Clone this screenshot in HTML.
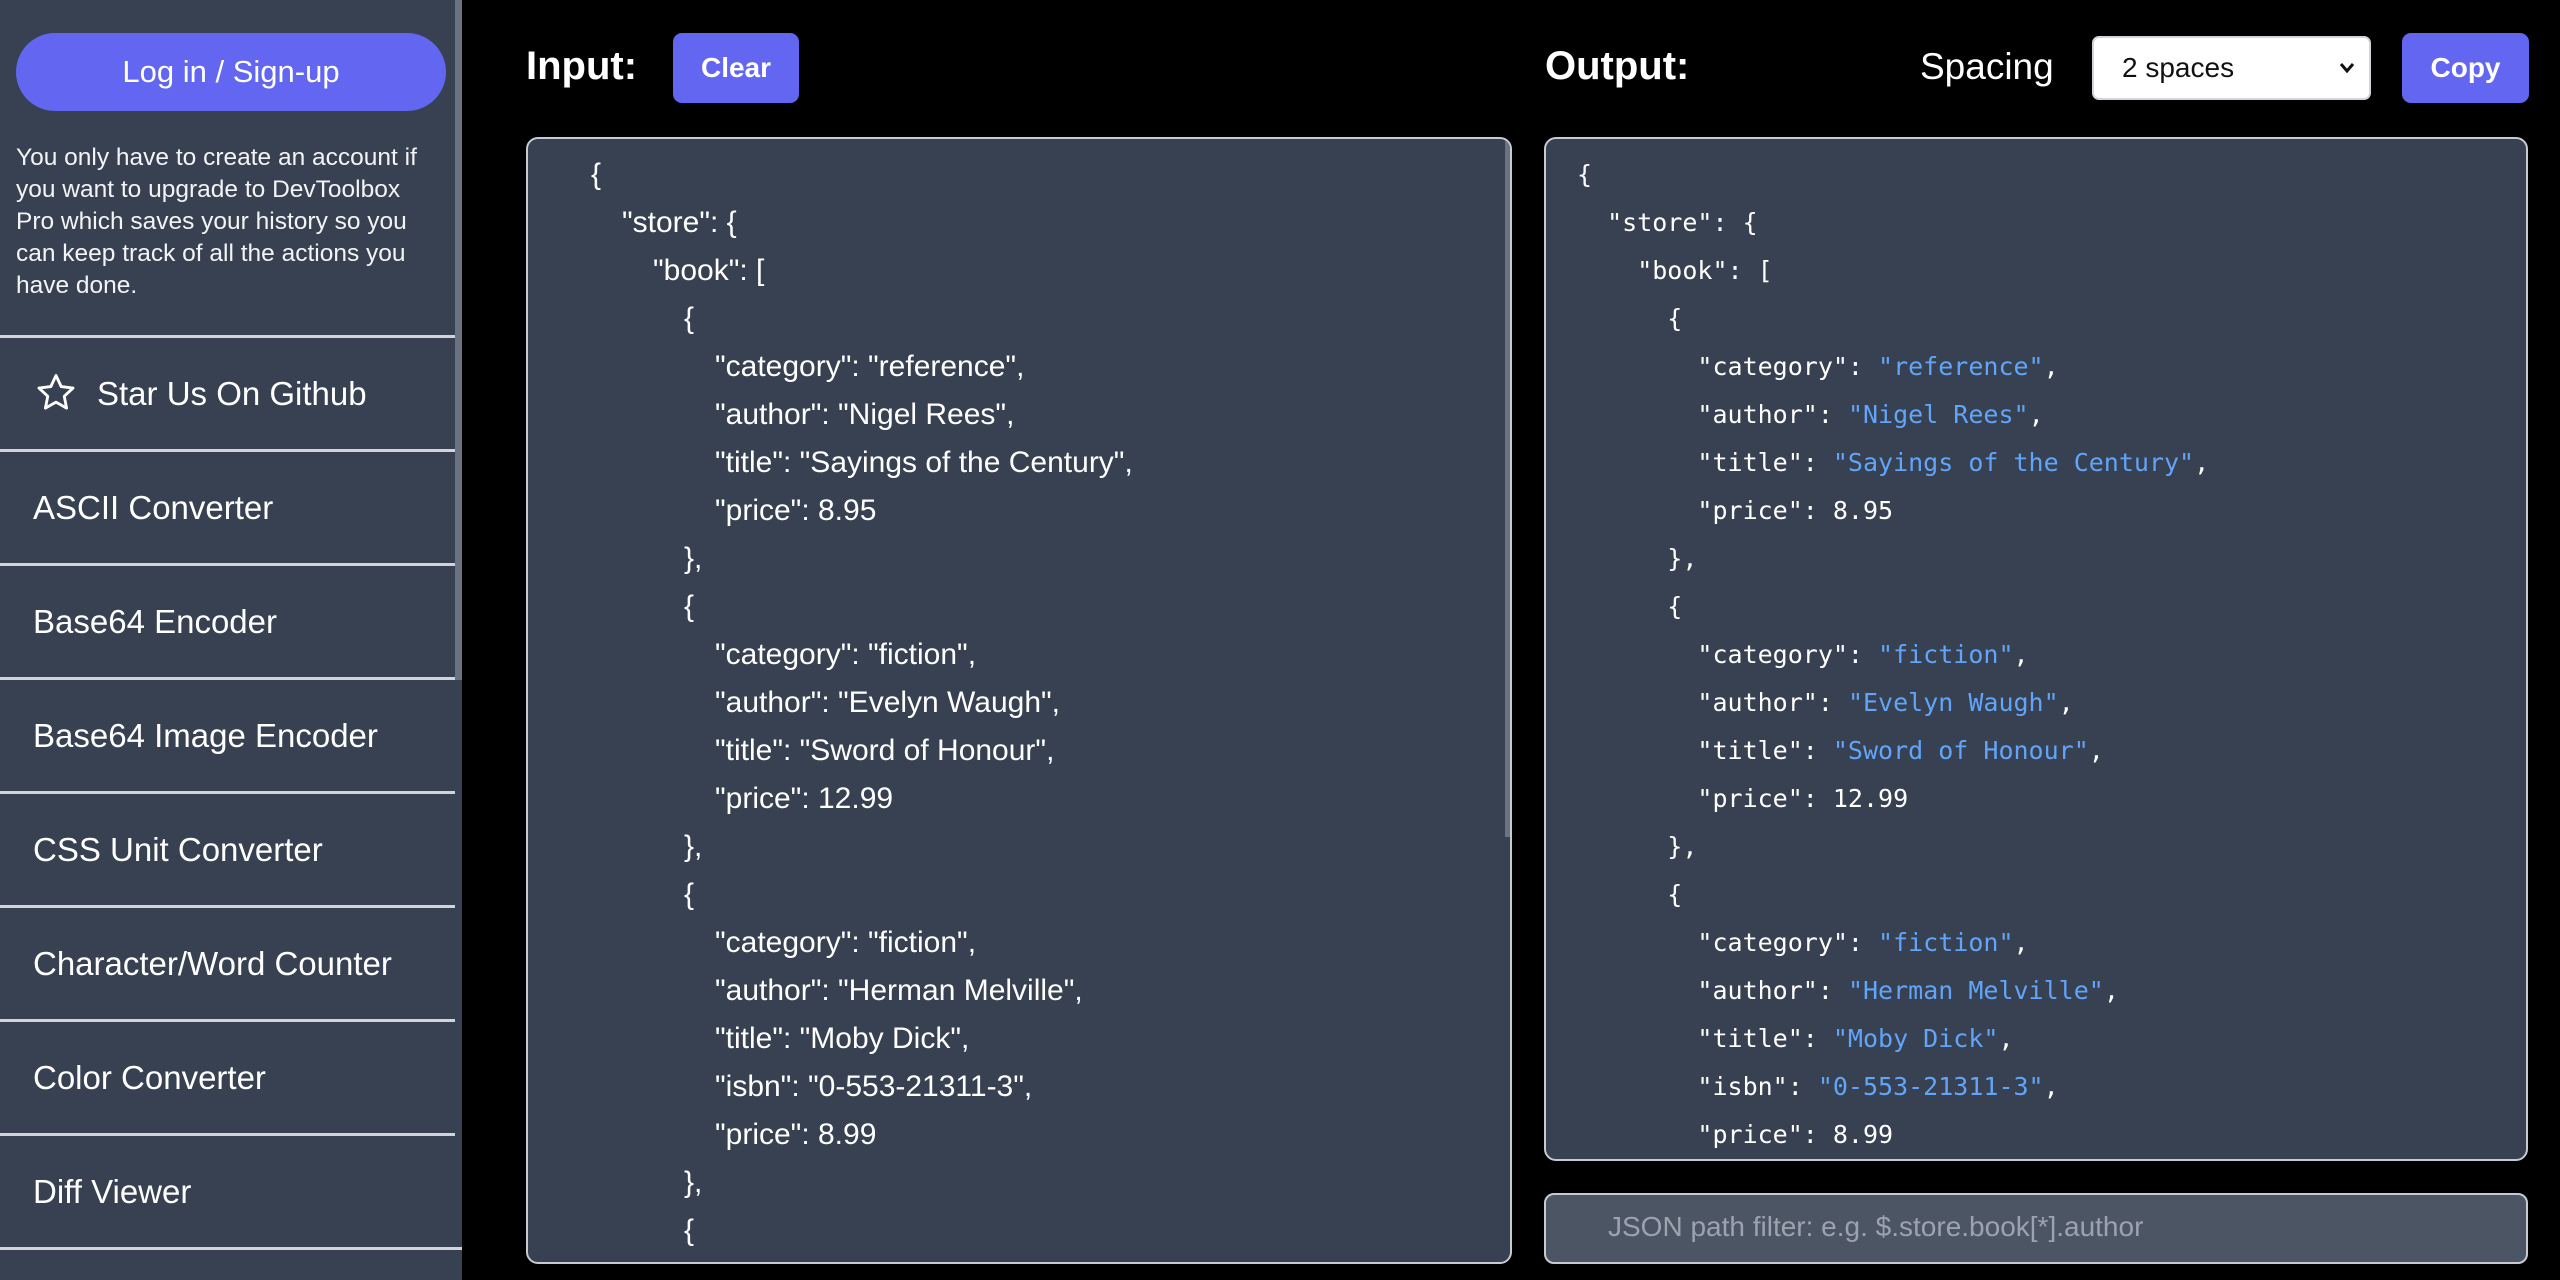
<!DOCTYPE html>
<html><head><meta charset="utf-8"><style>
*{margin:0;padding:0;box-sizing:border-box}
html,body{width:2560px;height:1280px;overflow:hidden}
body{background:#000;position:relative;font-family:"Liberation Sans",sans-serif;color:#fff}
.a{position:absolute}
#sb{left:0;top:0;width:462px;height:1280px;background:#374151;overflow:hidden}
.btn{background:#6366f1;color:#fff;display:flex;align-items:center;justify-content:center;font-weight:bold}
.nav{position:absolute;left:0;width:455px;height:114px;border-top:3px solid #d1d5db;font-size:33px;display:flex;align-items:center;padding-left:33px}
.box{background:#374151;border:2px solid #c7cbd1;border-radius:12px}
.ln{position:absolute;white-space:pre;font-size:30px;line-height:48px}
.mono{font-family:"DejaVu Sans Mono","Liberation Mono",monospace;font-size:25px}
.s{color:#60a5fa}
</style></head><body>
<div id="sb" class="a">
 <div class="a btn" style="left:16px;top:33px;width:430px;height:78px;border-radius:40px;font-weight:normal;font-size:31px">Log in / Sign-up</div>
 <div class="a" style="left:16px;top:142px;width:425px;font-size:24.5px;line-height:32px;color:#f3f4f6">You only have to create an account if you want to upgrade to DevToolbox Pro which saves your history so you can keep track of all the actions you have done.</div>
 <div class="nav" style="top:335px;padding-left:97px">Star Us On Github</div>
 <svg class="a" style="left:34px;top:371px" width="44" height="43" viewBox="0 0 24 24" fill="none" stroke="#fff" stroke-width="1.6" stroke-linejoin="round"><path d="M12 2.5l2.9 6.2 6.6.8-4.9 4.6 1.3 6.6L12 17.4l-5.9 3.3 1.3-6.6-4.9-4.6 6.6-.8z"/></svg>
 <div class="nav" style="top:449px">ASCII Converter</div>
 <div class="nav" style="top:563px">Base64 Encoder</div>
 <div class="nav" style="top:677px">Base64 Image Encoder</div>
 <div class="nav" style="top:791px">CSS Unit Converter</div>
 <div class="nav" style="top:905px">Character/Word Counter</div>
 <div class="nav" style="top:1019px">Color Converter</div>
 <div class="nav" style="top:1133px">Diff Viewer</div>
 <div class="a" style="left:0;top:1247px;width:462px;height:3px;background:#d1d5db"></div>
 <div class="a" style="left:455px;top:0;width:7px;height:680px;background:#6b7280"></div>
</div>

<div class="a" style="left:526px;top:44px;font-size:40px;font-weight:bold">Input:</div>
<div class="a btn" style="left:673px;top:33px;width:126px;height:70px;border-radius:9px;font-size:28px">Clear</div>
<div class="a" style="left:1545px;top:44px;font-size:40px;font-weight:bold">Output:</div>
<div class="a" style="left:1920px;top:46px;font-size:37px">Spacing</div>
<div class="a" style="left:2092px;top:36px;width:279px;height:64px;background:#fff;border:2px solid #d1d5db;border-radius:7px;color:#111;font-size:28px;padding:14px 0 0 28px">2 spaces<svg class="a" style="right:14px;top:24px" width="16" height="12" viewBox="0 0 16 12"><path d="M2 2l6 7 6-7" stroke="#111" stroke-width="3" fill="none"/></svg></div>
<div class="a btn" style="left:2402px;top:33px;width:127px;height:70px;border-radius:9px;font-size:28px">Copy</div>

<div class="a box" style="left:526px;top:137px;width:986px;height:1127px;overflow:hidden">
 <div class="a" style="left:977px;top:0;width:6px;height:698px;background:#6b7280"></div>
</div>
<div class="a" style="left:0;top:0">
<div class="ln" style="left:591px;top:151px">{</div>
<div class="ln" style="left:622px;top:199px">"store": {</div>
<div class="ln" style="left:653px;top:247px">"book": [</div>
<div class="ln" style="left:684px;top:295px">{</div>
<div class="ln" style="left:715px;top:343px">"category": "reference",</div>
<div class="ln" style="left:715px;top:391px">"author": "Nigel Rees",</div>
<div class="ln" style="left:715px;top:439px">"title": "Sayings of the Century",</div>
<div class="ln" style="left:715px;top:487px">"price": 8.95</div>
<div class="ln" style="left:684px;top:535px">},</div>
<div class="ln" style="left:684px;top:583px">{</div>
<div class="ln" style="left:715px;top:631px">"category": "fiction",</div>
<div class="ln" style="left:715px;top:679px">"author": "Evelyn Waugh",</div>
<div class="ln" style="left:715px;top:727px">"title": "Sword of Honour",</div>
<div class="ln" style="left:715px;top:775px">"price": 12.99</div>
<div class="ln" style="left:684px;top:823px">},</div>
<div class="ln" style="left:684px;top:871px">{</div>
<div class="ln" style="left:715px;top:919px">"category": "fiction",</div>
<div class="ln" style="left:715px;top:967px">"author": "Herman Melville",</div>
<div class="ln" style="left:715px;top:1015px">"title": "Moby Dick",</div>
<div class="ln" style="left:715px;top:1063px">"isbn": "0-553-21311-3",</div>
<div class="ln" style="left:715px;top:1111px">"price": 8.99</div>
<div class="ln" style="left:684px;top:1159px">},</div>
<div class="ln" style="left:684px;top:1207px">{</div>
</div>

<div class="a box" style="left:1544px;top:137px;width:984px;height:1024px"></div>
<div class="a mono" style="left:0;top:0">
<div class="ln mono" style="left:1577px;top:151px">{</div>
<div class="ln mono" style="left:1577px;top:199px">  "store": {</div>
<div class="ln mono" style="left:1577px;top:247px">    "book": [</div>
<div class="ln mono" style="left:1577px;top:295px">      {</div>
<div class="ln mono" style="left:1577px;top:343px">        "category": <span class="s">"reference"</span>,</div>
<div class="ln mono" style="left:1577px;top:391px">        "author": <span class="s">"Nigel Rees"</span>,</div>
<div class="ln mono" style="left:1577px;top:439px">        "title": <span class="s">"Sayings of the Century"</span>,</div>
<div class="ln mono" style="left:1577px;top:487px">        "price": 8.95</div>
<div class="ln mono" style="left:1577px;top:535px">      },</div>
<div class="ln mono" style="left:1577px;top:583px">      {</div>
<div class="ln mono" style="left:1577px;top:631px">        "category": <span class="s">"fiction"</span>,</div>
<div class="ln mono" style="left:1577px;top:679px">        "author": <span class="s">"Evelyn Waugh"</span>,</div>
<div class="ln mono" style="left:1577px;top:727px">        "title": <span class="s">"Sword of Honour"</span>,</div>
<div class="ln mono" style="left:1577px;top:775px">        "price": 12.99</div>
<div class="ln mono" style="left:1577px;top:823px">      },</div>
<div class="ln mono" style="left:1577px;top:871px">      {</div>
<div class="ln mono" style="left:1577px;top:919px">        "category": <span class="s">"fiction"</span>,</div>
<div class="ln mono" style="left:1577px;top:967px">        "author": <span class="s">"Herman Melville"</span>,</div>
<div class="ln mono" style="left:1577px;top:1015px">        "title": <span class="s">"Moby Dick"</span>,</div>
<div class="ln mono" style="left:1577px;top:1063px">        "isbn": <span class="s">"0-553-21311-3"</span>,</div>
<div class="ln mono" style="left:1577px;top:1111px">        "price": 8.99</div>
</div>

<div class="a" style="left:1544px;top:1193px;width:984px;height:71px;background:#4b5563;border:2px solid #c7cbd1;border-radius:10px;color:#9ca3af;font-size:28px;padding:16px 0 0 62px">JSON path filter: e.g. $.store.book[*].author</div>
</body></html>
